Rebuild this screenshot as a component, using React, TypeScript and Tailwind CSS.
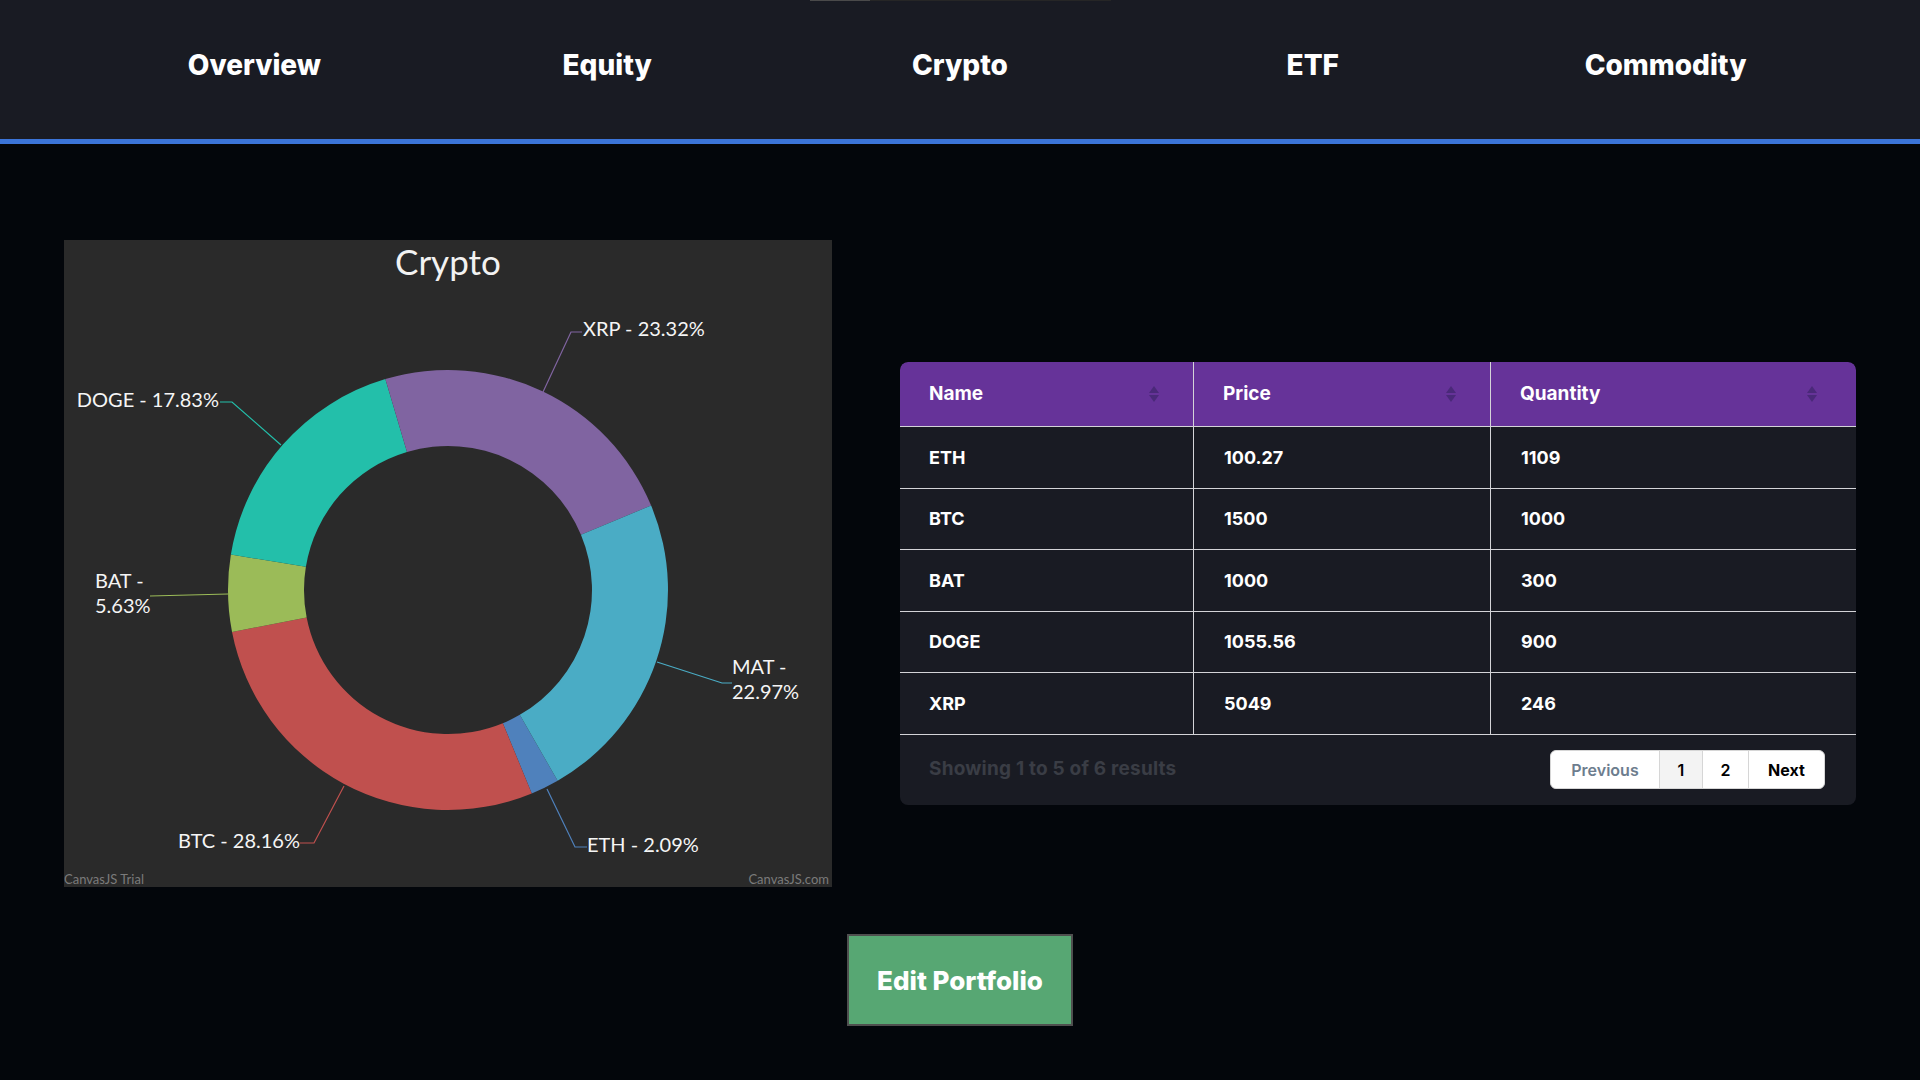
import React, { useState } from 'react';

type Slice = { name: string; pct: number; color: string };

const slices: Slice[] = [
  { name: 'ETH', pct: 2.09, color: '#4f81bc' },
  { name: 'BTC', pct: 28.16, color: '#c0504e' },
  { name: 'BAT', pct: 5.63, color: '#9bbb58' },
  { name: 'DOGE', pct: 17.83, color: '#23bfaa' },
  { name: 'XRP', pct: 23.32, color: '#8064a1' },
  { name: 'MAT', pct: 22.97, color: '#4aacc5' },
];

const rows = [
  { name: 'ETH', price: '100.27', qty: '1109' },
  { name: 'BTC', price: '1500', qty: '1000' },
  { name: 'BAT', price: '1000', qty: '300' },
  { name: 'DOGE', price: '1055.56', qty: '900' },
  { name: 'XRP', price: '5049', qty: '246' },
];

const tabs = ['Overview', 'Equity', 'Crypto', 'ETF', 'Commodity'];

const CX = 384;
const CY = 350;
const RO = 220;
const RI = 144;

function arcPath(a0: number, a1: number) {
  const rad = (d: number) => (d * Math.PI) / 180;
  const pt = (r: number, a: number) => `${CX + r * Math.cos(rad(a))} ${CY + r * Math.sin(rad(a))}`;
  const large = a1 - a0 > 180 ? 1 : 0;
  return `M ${pt(RO, a0)} A ${RO} ${RO} 0 ${large} 1 ${pt(RO, a1)} L ${pt(RI, a1)} A ${RI} ${RI} 0 ${large} 0 ${pt(RI, a0)} Z`;
}

function DonutChart() {
  let angle = 60.1;
  const paths = slices.map((s) => {
    const a0 = angle;
    const a1 = angle + s.pct * 3.6;
    angle = a1;
    return <path key={s.name} d={arcPath(a0, a1)} fill={s.color} />;
  });

  return (
    <div className="w-[768px] h-[647px] bg-[#2a2a2a] shrink-0">
      <svg width="768" height="647" viewBox="0 0 768 647" style={{ fontFamily: 'Lato, "Open Sans", sans-serif' }}>
        <text x="384" y="35" textAnchor="middle" fontSize="35" fill="#f2f2f2">Crypto</text>
        {paths}

        {/* leader lines */}
        <polyline points="479,152 507,92 518,92" fill="none" stroke="#8064a1" strokeWidth="1.2" />
        <polyline points="217,205 168,162 156,162" fill="none" stroke="#23bfaa" strokeWidth="1.2" />
        <polyline points="164,354 86,356" fill="none" stroke="#9bbb58" strokeWidth="1.2" />
        <polyline points="593,422 658,443 668,443" fill="none" stroke="#4aacc5" strokeWidth="1.2" />
        <polyline points="483,549 511,607 523,607" fill="none" stroke="#4f81bc" strokeWidth="1.2" />
        <polyline points="280,546 250,603 236,603" fill="none" stroke="#c0504e" strokeWidth="1.2" />

        <g fontSize="20" fill="#f5f5f5">
          <text x="519" y="96">XRP - 23.32%</text>
          <text x="155" y="167" textAnchor="end">DOGE - 17.83%</text>
          <text x="31" y="348">BAT -</text>
          <text x="31" y="373">5.63%</text>
          <text x="668" y="434">MAT -</text>
          <text x="668" y="459">22.97%</text>
          <text x="523" y="612">ETH - 2.09%</text>
          <text x="236" y="608" textAnchor="end">BTC - 28.16%</text>
        </g>

        <text x="0" y="644" fontSize="13" fill="#7b7b7b">CanvasJS Trial</text>
        <text x="765" y="644" fontSize="13" fill="#7b7b7b" textAnchor="end">CanvasJS.com</text>
      </svg>
    </div>
  );
}

function SortIcon() {
  return (
    <svg width="10" height="17" viewBox="0 0 10 17" className="shrink-0">
      <path d="M5 0 L10 7 L0 7 Z" fill="#4a2979" />
      <path d="M0 9 L10 9 L5 16 Z" fill="#4a2979" />
    </svg>
  );
}

function HoldingsTable() {
  const [page, setPage] = useState(1);

  return (
    <div className="w-[956px] mt-[122px] bg-[#191b23] rounded-lg overflow-hidden shrink-0">
      {/* header */}
      <div className="grid grid-cols-[294px_297px_360px] h-[65px] bg-[#663399] border-b border-[#d4d4d8] rounded-t-lg">
        {['Name', 'Price', 'Quantity'].map((h, i) => (
          <div
            key={h}
            className={`flex items-center justify-between pl-[29px] pr-[34px] text-white text-[19px] font-bold ${
              i < 2 ? 'border-r border-[#d4d4d8]' : ''
            }`}
          >
            {h}
            <SortIcon />
          </div>
        ))}
      </div>

      {/* body */}
      {rows.map((r) => (
        <div key={r.name} className="grid grid-cols-[294px_297px_1fr] h-[61.5px] border-b border-[#d4d4d8]">
          <div className="flex items-center pl-[29px] border-r border-[#d4d4d8] text-white text-[18px] font-bold">{r.name}</div>
          <div className="flex items-center pl-[30px] border-r border-[#d4d4d8] text-white text-[18px] font-bold">{r.price}</div>
          <div className="flex items-center pl-[30px] text-white text-[18px] font-bold">{r.qty}</div>
        </div>
      ))}

      {/* footer */}
      <div className="h-[70px] flex items-center justify-between pl-[29px] pr-[31px]">
        <span className="text-[#3a3d45] text-[19px] font-bold tracking-[0.2px]">Showing 1 to 5 of 6 results</span>
        <div className="flex h-[39px] rounded-md overflow-hidden border border-[#d6d6d6] bg-white text-[16px] font-semibold">
          <button className="w-[109px] text-[#6d7d8e] border-r border-[#d6d6d6]">Previous</button>
          <button
            onClick={() => setPage(1)}
            className={`w-[43px] text-black border-r border-[#d6d6d6] ${page === 1 ? 'bg-[#f3f3f3]' : 'bg-white'}`}
          >
            1
          </button>
          <button
            onClick={() => setPage(2)}
            className={`w-[46px] text-black border-r border-[#d6d6d6] ${page === 2 ? 'bg-[#f3f3f3]' : 'bg-white'}`}
          >
            2
          </button>
          <button className="w-[75px] text-black font-bold">Next</button>
        </div>
      </div>
    </div>
  );
}

export default function App() {
  const [activeTab, setActiveTab] = useState('Crypto');

  return (
    <div className="min-h-screen bg-[#03060b] flex flex-col" style={{ fontFamily: 'Inter, "Open Sans", sans-serif' }}>
      {/* Header */}
      <header className="bg-[#191b23] border-b-[5px] border-[#3b74d8] h-[144px] flex flex-col">
        <div className="mx-auto w-[301px] h-px bg-[#262626] flex">
          <div className="w-[60px] h-px bg-[#4a4a4a]" />
        </div>
        <nav className="flex-1 grid grid-cols-5 px-[78px] pb-[10px]">
          {tabs.map((t) => (
            <button
              key={t}
              onClick={() => setActiveTab(t)}
              className={`flex items-center justify-center text-[28px] font-extrabold ${
                activeTab === t ? 'text-white' : 'text-white'
              }`}
            >
              {t}
            </button>
          ))}
        </nav>
      </header>

      {/* Main Content */}
      <main className="flex items-start justify-between px-16 pt-[96px]">
        <DonutChart />
        <HoldingsTable />
      </main>

      <div className="flex justify-center pt-[47px]">
        <button className="w-[226px] h-[92px] bg-[#57a773] border-2 border-[#4f4f4f] text-white text-[26px] font-extrabold">
          Edit Portfolio
        </button>
      </div>
    </div>
  );
}
